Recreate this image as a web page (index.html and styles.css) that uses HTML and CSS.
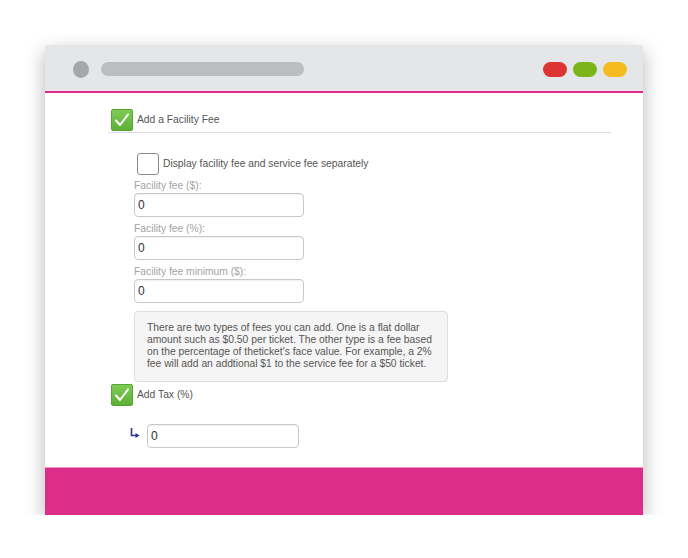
FILE: index.html
```html
<!DOCTYPE html>
<html>
<head>
<meta charset="utf-8">
<link rel="stylesheet" href="styles.css">
</head>
<body>
<div class="window">
  <div class="titlebar">
    <span class="tb-circle"></span>
    <span class="tb-bar"></span>
    <span class="tb-dots">
      <span class="dot red"></span>
      <span class="dot green"></span>
      <span class="dot yellow"></span>
    </span>
  </div>
  <div class="content">
    <div class="section-head">
      <span class="check-on"><svg width="22" height="22" viewBox="0 0 22 22"><path d="M5 11.5 L9 16 L17 5.5" fill="none" stroke="#fff" stroke-width="2" stroke-linecap="round" stroke-linejoin="round"/></svg></span>
      <span class="row-text">Add a Facility Fee</span>
    </div>
    <div class="sub">
      <div class="check-row">
        <span class="check-off"></span>
        <span class="row-text">Display facility fee and service fee separately</span>
      </div>
      <div class="field first">
        <div class="label">Facility fee ($):</div>
        <input class="input" type="text" value="0">
      </div>
      <div class="field">
        <div class="label">Facility fee (%):</div>
        <input class="input" type="text" value="0">
      </div>
      <div class="field">
        <div class="label">Facility fee minimum ($):</div>
        <input class="input" type="text" value="0">
      </div>
      <div class="info">There are two types of fees you can add. One is a flat dollar<br>amount such as $0.50 per ticket. The other type is a fee based<br>on the percentage of theticket's face value. For example, a 2%<br>fee will add an addtional $1 to the service fee for a $50 ticket.</div>
    </div>
    <div class="tax-head">
      <span class="check-on"><svg width="22" height="22" viewBox="0 0 22 22"><path d="M5 11.5 L9 16 L17 5.5" fill="none" stroke="#fff" stroke-width="2" stroke-linecap="round" stroke-linejoin="round"/></svg></span>
      <span class="row-text">Add Tax (%)</span>
    </div>
    <div class="tax-row">
      <svg class="arrow" width="10" height="12" viewBox="0 0 10 12"><path d="M1.5 1 V8.5 H6" fill="none" stroke="#2a3590" stroke-width="1.6"/><path d="M5.5 6 L9.5 8.5 L5.5 11 Z" fill="#2a3590"/></svg>
      <input class="input tax" type="text" value="0">
    </div>
  </div>
  <div class="footer"></div>
</div>
</body>
</html>
```

FILE: styles.css
```css
html, body {
  margin: 0;
  padding: 0;
  background: #ffffff;
  font-family: "Liberation Sans", Arial, sans-serif;
}

.window {
  margin: 45px 0 0 45px;
  width: 598px;
  height: 470px;
  display: flex;
  flex-direction: column;
  box-shadow: 0 7px 18px rgba(0, 0, 0, 0.3);
}

.titlebar {
  box-sizing: border-box;
  height: 48px;
  flex: none;
  background: #e5e6e8;
  border-bottom: 2px solid #e2288a;
  padding: 2px 16px 0 28px;
  display: flex;
  align-items: center;
}

.tb-circle {
  width: 16px;
  height: 17px;
  border-radius: 50%;
  background: #a6a7a9;
}

.tb-bar {
  width: 203px;
  height: 14px;
  margin-left: 12px;
  border-radius: 7px;
  background: #bcbdbf;
}

.tb-dots {
  margin-left: auto;
  display: flex;
  gap: 6px;
}

.dot {
  width: 24px;
  height: 15px;
  border-radius: 8px;
}

.dot.red { background: #dc3333; }
.dot.green { background: #7bb518; }
.dot.yellow { background: #f6bb1f; }

.content {
  flex: 1;
  background: #ffffff;
  padding: 16px 0 0 63px;
}

.footer {
  box-sizing: border-box;
  height: 48px;
  flex: none;
  background: #dc2d8a;
  border-top: 1px solid #ea8fc0;
}

.row-text {
  font-size: 10.3px;
  color: #555555;
  line-height: 12px;
}

.section-head,
.tax-head {
  display: flex;
  align-items: center;
  gap: 4px;
  padding-left: 3px;
}

.section-head {
  box-sizing: border-box;
  width: 503px;
  padding-bottom: 1px;
  border-bottom: 1px solid #dcdce3;
}

.tax-head {
  margin-top: 2px;
}

.check-on {
  box-sizing: border-box;
  width: 22px;
  height: 22px;
  border-radius: 2px;
  border: 1px solid #55a532;
  background: linear-gradient(#80cb57, #5bb036);
  display: flex;
  align-items: center;
  justify-content: center;
}

.check-on svg {
  display: block;
  margin: -1px;
}

.sub {
  padding-left: 26px;
}

.check-row {
  margin-top: 20px;
  margin-left: 3px;
  display: flex;
  align-items: center;
  gap: 4px;
}

.check-off {
  box-sizing: border-box;
  width: 22px;
  height: 22px;
  border: 1px solid #8a8a8a;
  border-radius: 3px;
  background: #ffffff;
}

.field {
  margin-top: 6px;
}

.field.first {
  margin-top: 5px;
}

.label {
  font-size: 10.3px;
  line-height: 12px;
  color: #a3a3a3;
}

.input {
  display: block;
  box-sizing: border-box;
  width: 170px;
  height: 24px;
  margin: 1px 0 0;
  padding: 0 0 0 3px;
  border: 1px solid #c8c8c8;
  border-radius: 4px;
  box-shadow: inset 0 1px 1px rgba(0, 0, 0, 0.06);
  font-family: "Liberation Sans", Arial, sans-serif;
  font-size: 12px;
  color: #333333;
  background: #ffffff;
  outline: none;
}

.info {
  box-sizing: border-box;
  width: 314px;
  margin-top: 8px;
  padding: 10px 10px 11px 12px;
  background: #f5f5f5;
  border: 1px solid #dedede;
  border-radius: 4px;
  font-size: 10.3px;
  line-height: 12px;
  color: #555555;
  white-space: nowrap;
}

.tax-row {
  margin-top: 18px;
  padding-left: 22px;
  display: flex;
  align-items: flex-start;
  gap: 7px;
}

.input.tax {
  width: 152px;
  margin-top: 0;
}

.arrow {
  display: block;
  margin-top: 3px;
}
```
